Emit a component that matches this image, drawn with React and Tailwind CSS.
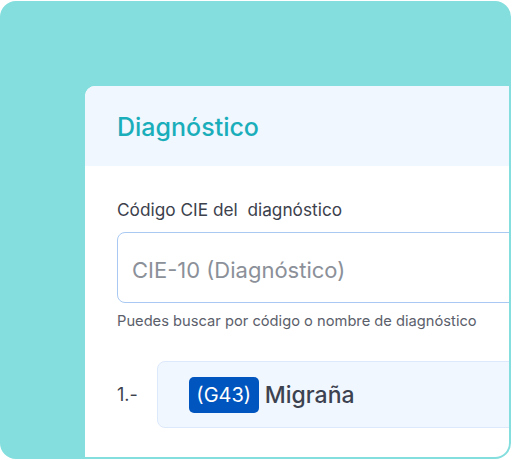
export default function App() {
  const font = { fontFamily: '"Inter", "Noto Sans", sans-serif' };
  return (
    <div className="bg-white w-[512px] h-[460px] pt-px" style={font}>
      <div className="w-[511px] h-[458px] bg-[#84dede] rounded-[16px] border-2 border-[#84dede] overflow-hidden pl-[83px] pt-[83px]">
        <div className="w-[480px] h-[420px] bg-white rounded-tl-[10px] overflow-hidden">
          <div className="h-[80px] bg-[#f1f7fe] px-[32px] flex items-center">
            <h1 className="text-[25px] leading-[32px] text-[#1aaebb] font-medium pt-[2px]">Diagnóstico</h1>
          </div>
          <div className="pt-[32px] pl-[32px]">
            <div className="text-[17.25px] leading-[24px] text-[#3c414c]">Código CIE del&nbsp; diagnóstico</div>
            <div className="mt-[10px] w-[480px] h-[71px] border border-[#a9c9f2] rounded-[8px] flex items-center pl-[14px] pt-[4px]">
              <span className="text-[22px] leading-[28px] text-[#8b9099]">CIE-10 (Diagnóstico)</span>
            </div>
            <div className="mt-[8px] text-[14.7px] leading-[20px] text-[#5b606b]">Puedes buscar por código o nombre de diagnóstico</div>
            <div className="mt-[30px] flex items-center">
              <span className="w-[41px] text-[18px] leading-[24px] text-[#3c414c]">1.-</span>
              <div className="w-[420px] h-[67px] bg-[#f1f7fe] border border-[#dce9fb] rounded-[8px] flex items-center pl-[31px]">
                <span className="w-[70px] h-[36px] bg-[#0055be] rounded-[5px] flex items-center justify-center text-white text-[20px] leading-[28px]">(G43)</span>
                <span className="ml-[6px] text-[23px] leading-[28px] text-[#3c4250] font-medium">Migraña</span>
              </div>
            </div>
          </div>
        </div>
      </div>
    </div>
  );
}
